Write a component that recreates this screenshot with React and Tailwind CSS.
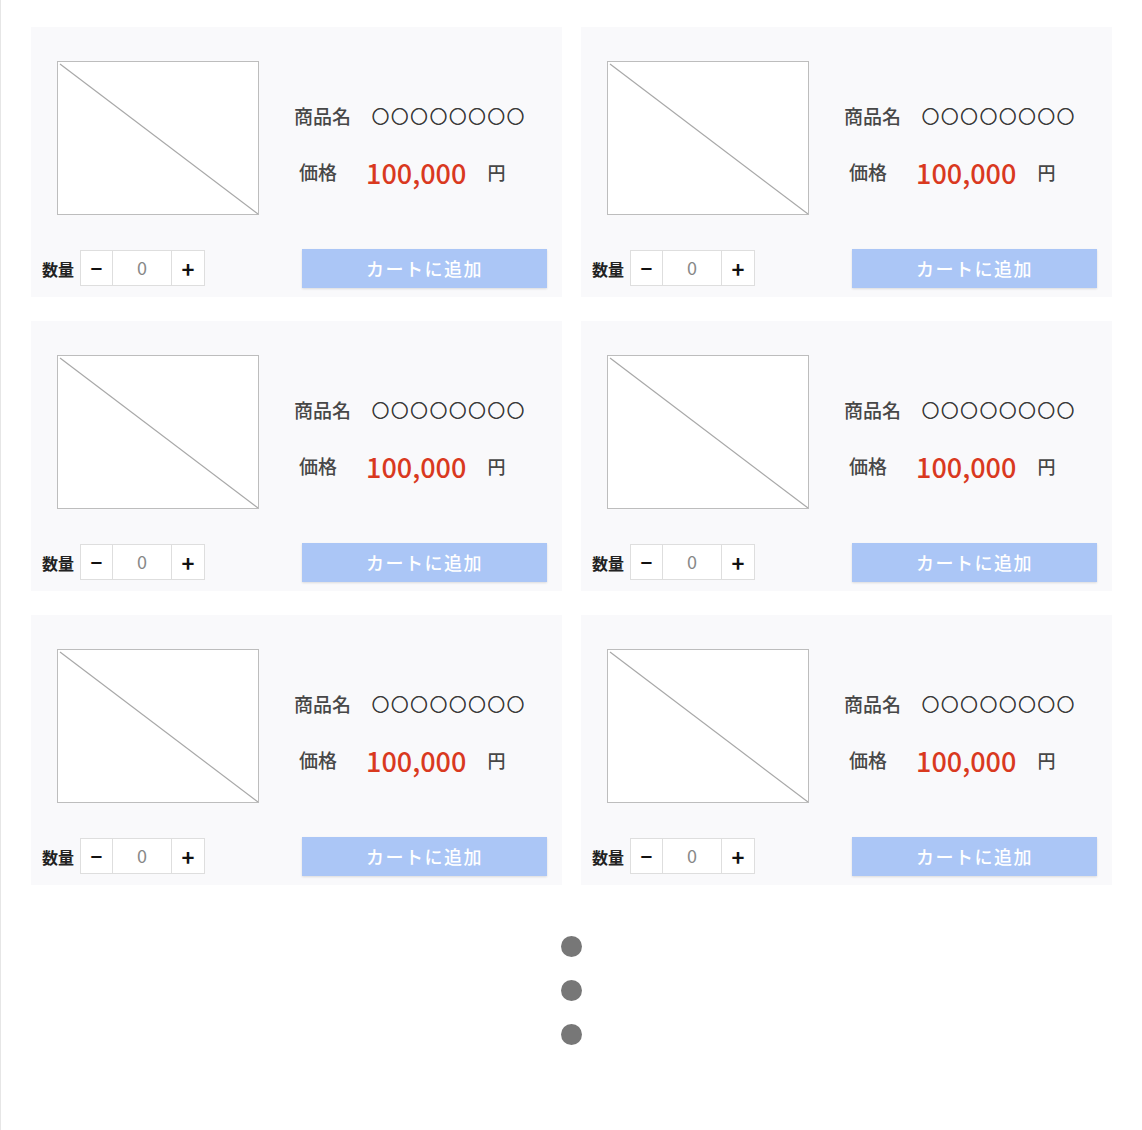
import React from "react";

const font = { fontFamily: '"Noto Sans CJK JP", "Noto Sans", sans-serif' };

function Card() {
  return (
    <div className="flex h-[270px] flex-col bg-[#f9f9fb]">
      <div className="flex pl-[26px] pt-[34px]">
        <div className="relative h-[154px] w-[202px] shrink-0 border border-[#bdbdbd] bg-white">
          <svg className="absolute inset-0 h-full w-full" viewBox="0 0 200 152" preserveAspectRatio="none">
            <line x1="2" y1="2" x2="200" y2="152" stroke="#a8a8a8" strokeWidth="1.2" vectorEffect="non-scaling-stroke" />
          </svg>
        </div>
        <div className="ml-[35px] flex flex-col pt-[40px]">
          <div className="flex h-[30px] items-center text-[19px] font-medium text-[#474747]">
            <span>商品名</span>
            <span className="ml-[21px] text-[17px] tracking-[2.3px] text-[#3a3a3a] [-webkit-text-stroke:0.7px_#3a3a3a]">○○○○○○○○</span>
          </div>
          <div className="mt-[23px] flex h-[36px] items-center pl-[5px]">
            <span className="text-[19px] font-medium text-[#474747]">価格</span>
            <span className="ml-[29px] text-[27px] font-medium leading-none text-[#d9391f]">100,000</span>
            <span className="ml-[21px] text-[18px] font-medium text-[#474747]">円</span>
          </div>
        </div>
      </div>
      <div className="mt-auto flex items-center pb-[9px] pl-[11px] pr-[15px]">
        <span className="text-[16px] font-bold text-[#222222]">数量</span>
        <div className="ml-[6px] flex h-[36px] -translate-y-[1px] border border-[#dedede] bg-white">
          <button className="flex w-[31px] items-center justify-center text-[20px] font-bold leading-none text-[#111111]">−</button>
          <div className="flex w-[60px] items-center justify-center border-x border-[#dedede] text-[18px] text-[#888888]">0</div>
          <button className="flex w-[32px] items-center justify-center text-[22px] font-bold leading-none text-[#111111]">+</button>
        </div>
        <button className="ml-auto flex h-[39px] w-[245px] items-center justify-center bg-[#abc6f6] text-[18px] font-medium tracking-[1.5px] text-white shadow-[0_1px_2px_rgba(0,0,0,0.12)]">
          カートに追加
        </button>
      </div>
    </div>
  );
}

export default function App() {
  return (
    <div style={font} className="min-h-[1130px] border-l border-[#e6e6e6] bg-white px-[30px] pt-[27px]">
      <div className="grid grid-cols-2 gap-x-[19px] gap-y-[24px]">
        {Array.from({ length: 6 }).map((_, i) => (
          <Card key={i} />
        ))}
      </div>
      <div className="mt-[51px] flex flex-col items-center gap-[23px]">
        <div className="h-[21px] w-[21px] rounded-full bg-[#777777]" />
        <div className="h-[21px] w-[21px] rounded-full bg-[#777777]" />
        <div className="h-[21px] w-[21px] rounded-full bg-[#777777]" />
      </div>
    </div>
  );
}
